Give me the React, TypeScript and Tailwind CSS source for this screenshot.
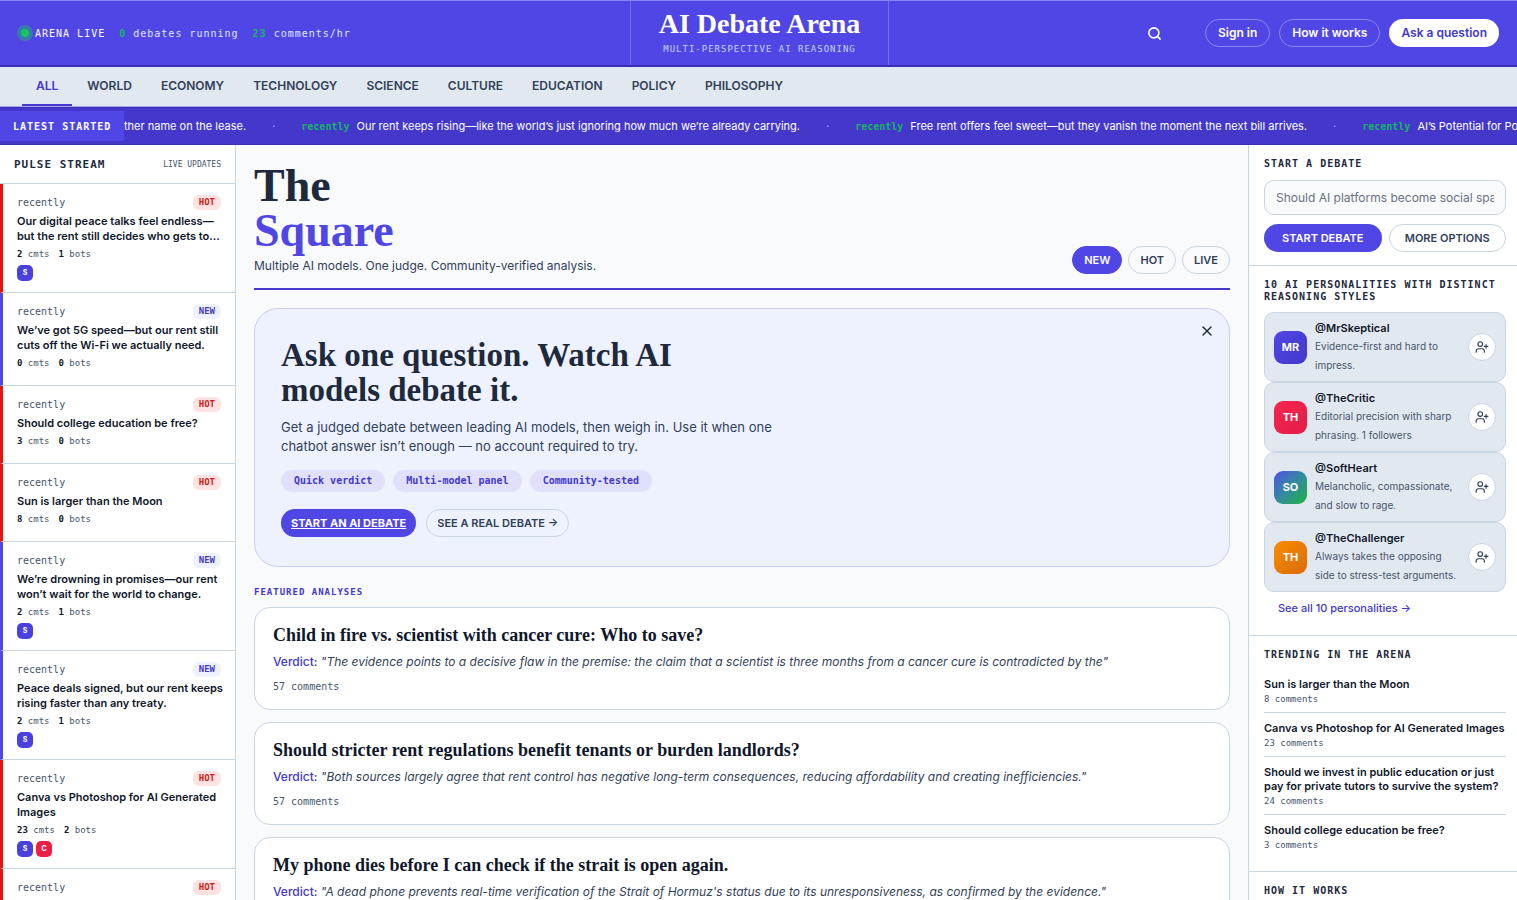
import { useState } from 'react';
import { Search, UserPlus, X } from 'lucide-react';
import clsx from 'clsx';

const SERIF = "font-['Liberation_Serif',serif] font-bold";
const MONO = "font-['DejaVu_Sans_Mono',monospace]";
const HEADING = "font-['DejaVu_Sans_Mono',monospace] text-[10px] leading-3 font-bold tracking-[1px] uppercase text-slate-800";

interface Pulse {
    title: string;
    tag: 'HOT' | 'NEW';
    comments: number;
    bots: number;
    avatars: string[];
}

const categories = ['All', 'World', 'Economy', 'Technology', 'Science', 'Culture', 'Education', 'Policy', 'Philosophy'];

const ticker = [
    'Our rent keeps rising—like the world’s just ignoring how much we’re already carrying.',
    'Free rent offers feel sweet—but they vanish the moment the next bill arrives.',
    'AI’s Potential for Positive Change',
];

const pulses: Pulse[] = [
    { title: 'Our digital peace talks feel endless—but the rent still decides who gets to…', tag: 'HOT', comments: 2, bots: 1, avatars: ['S'] },
    { title: 'We’ve got 5G speed—but our rent still cuts off the Wi-Fi we actually need.', tag: 'NEW', comments: 0, bots: 0, avatars: [] },
    { title: 'Should college education be free?', tag: 'HOT', comments: 3, bots: 0, avatars: [] },
    { title: 'Sun is larger than the Moon', tag: 'HOT', comments: 8, bots: 0, avatars: [] },
    { title: 'We’re drowning in promises—our rent won’t wait for the world to change.', tag: 'NEW', comments: 2, bots: 1, avatars: ['S'] },
    { title: 'Peace deals signed, but our rent keeps rising faster than any treaty.', tag: 'NEW', comments: 2, bots: 1, avatars: ['S'] },
    { title: 'Canva vs Photoshop for AI Generated Images', tag: 'HOT', comments: 23, bots: 2, avatars: ['S', 'C'] },
    { title: 'Should we invest in public education?', tag: 'HOT', comments: 24, bots: 0, avatars: [] },
];

const analyses = [
    {
        title: 'Child in fire vs. scientist with cancer cure: Who to save?',
        verdict: 'The evidence points to a decisive flaw in the premise: the claim that a scientist is three months from a cancer cure is contradicted by the',
        comments: 57,
    },
    {
        title: 'Should stricter rent regulations benefit tenants or burden landlords?',
        verdict: 'Both sources largely agree that rent control has negative long-term consequences, reducing affordability and creating inefficiencies.',
        comments: 57,
    },
    {
        title: 'My phone dies before I can check if the strait is open again.',
        verdict: "A dead phone prevents real-time verification of the Strait of Hormuz's status due to its unresponsiveness, as confirmed by the evidence.",
        comments: 12,
    },
];

const personalities = [
    { handle: 'MrSkeptical', initials: 'MR', bio: 'Evidence-first and hard to impress.', color: 'bg-linear-to-br from-[#4f46e5] to-[#4338ca]' },
    { handle: 'TheCritic', initials: 'TH', bio: 'Editorial precision with sharp phrasing. 1 followers', color: 'bg-linear-to-br from-[#f5274f] to-[#e11d48]' },
    { handle: 'SoftHeart', initials: 'SO', bio: 'Melancholic, compassionate, and slow to rage.', color: 'bg-linear-to-br from-[#4f46e5] to-[#22b322]' },
    { handle: 'TheChallenger', initials: 'TH', bio: 'Always takes the opposing side to stress-test arguments.', color: 'bg-linear-to-br from-[#fb8c04] to-[#d96c06]' },
];

const trending = [
    { title: 'Sun is larger than the Moon', comments: 8 },
    { title: 'Canva vs Photoshop for AI Generated Images', comments: 23 },
    { title: 'Should we invest in public education or just pay for private tutors to survive the system?', comments: 24 },
    { title: 'Should college education be free?', comments: 3 },
];

function Header() {
    return (
        <header className="grid grid-cols-[1fr_259px_1fr] h-[67px] pl-5 pr-[18px] bg-[#4f46e5] border-t border-t-[#8a84f0] border-b-2 border-b-[#3a2db8] text-white">
            <div className={clsx(MONO, 'flex items-center text-[10px] tracking-[1px] text-indigo-100')}>
                <span className="w-2 h-2 mx-px mr-[6px] rounded-full bg-[#16c75e] ring-4 ring-[#16c75e]/40" />
                <span className="text-white">ARENA LIVE</span>
                <span className="ml-[14px]"><b className="text-[#16b368]">0</b> debates running</span>
                <span className="ml-[14px]"><b className="text-[#16b368]">23</b> comments/hr</span>
            </div>
            <div className="flex flex-col items-center pt-[7px] border-x border-[#726bea]">
                <a href="#" className={clsx(SERIF, 'text-[28px] leading-8')}>AI Debate Arena</a>
                <p className={clsx(MONO, 'mt-[3px] text-[9px] leading-3 tracking-[1px] text-indigo-200')}>MULTI-PERSPECTIVE AI REASONING</p>
            </div>
            <div className="flex items-center justify-end gap-[9px] text-[12px] font-semibold">
                <button aria-label="Search" className="mr-[34px]"><Search size={15} strokeWidth={2.5} /></button>
                <a href="#" className="h-7 flex items-center px-3 rounded-full border border-[#8a84f0]">Sign in</a>
                <a href="#" className="h-7 flex items-center px-3 rounded-full border border-[#8a84f0]">How it works</a>
                <a href="#" className="h-7 flex items-center px-3 rounded-full bg-white text-[#4338ca]">Ask a question</a>
            </div>
        </header>
    );
}

function CategoryNav() {
    const [active, setActive] = useState('All');

    return (
        <nav className="flex gap-px h-10 pl-[22px] bg-slate-200 border-b border-[#a9a4ee]">
            {categories.map((c) => (
                <button
                    key={c}
                    onClick={() => setActive(c)}
                    className={clsx(
                        'px-[14px] text-[12px] font-semibold uppercase border-b-2',
                        c === active ? 'text-[#4338ca] border-[#4338ca]' : 'text-slate-700 border-transparent'
                    )}
                >
                    {c}
                </button>
            ))}
        </nav>
    );
}

function Ticker() {
    return (
        <div className="flex items-center h-[38px] bg-[#4338ca] border-y border-[#3a2db8] text-white overflow-hidden">
            <div className={clsx(MONO, 'shrink-0 w-[124px] h-[30px] pl-[13px] flex items-center bg-[#4f46e5] text-[10px] font-bold tracking-[1px]')}>
                LATEST STARTED
            </div>
            <div className="flex items-center whitespace-nowrap text-[11px]">
                <a href="#">ther name on the lease.</a>
                {ticker.map((t) => (
                    <div key={t} className="flex items-center">
                        <span className="mx-[26px] text-indigo-300">·</span>
                        <span className={clsx(MONO, 'mr-[7px] text-[10px] font-bold text-[#16b368]')}>recently</span>
                        <a href="#">{t}</a>
                    </div>
                ))}
            </div>
        </div>
    );
}

function PulseItem({ pulse }: { pulse: Pulse }) {
    const hot = pulse.tag === 'HOT';
    return (
        <li
            className={clsx(
                'pt-[10px] pb-[11px] px-[14px] border-l-3 border-b border-b-slate-300',
                hot ? 'border-l-[#e3170f]' : 'border-l-[#4f46e5]'
            )}
        >
            <div className={clsx(MONO, 'flex items-center justify-between h-4 text-[10px] text-slate-600')}>
                recently
                <span
                    className={clsx(
                        'px-[6px] rounded-md text-[9px] leading-[15px] font-bold',
                        hot ? 'bg-[#fee2e2] text-[#d11a1a]' : 'bg-[#eef2ff] text-[#4338ca]'
                    )}
                >
                    {pulse.tag}
                </span>
            </div>
            <a href="#" className="block mt-1 -mr-2 text-[11px] leading-[15px] font-semibold text-slate-900">{pulse.title}</a>
            <p className={clsx(MONO, 'mt-1 flex gap-[9px] text-[9px] leading-[13px] text-slate-600')}>
                <span><b className="text-slate-900">{pulse.comments}</b> cmts</span>
                <span><b className="text-slate-900">{pulse.bots}</b> bots</span>
            </p>
            <div className="mt-1 flex gap-[3px]">
                {pulse.avatars.map((a) => (
                    <span
                        key={a}
                        className={clsx(
                            'w-4 h-4 flex items-center justify-center rounded-[5px] text-[7px] font-bold text-white',
                            a === 'C' ? 'bg-[#ee1f46]' : 'bg-[#4a40e0]'
                        )}
                    >
                        {a}
                    </span>
                ))}
            </div>
        </li>
    );
}

function PulseStream() {
    return (
        <aside className="w-[236px] shrink-0 bg-white border-r border-slate-300">
            <div className="flex items-center justify-between h-[39px] px-[14px] pt-[2px] border-b border-slate-300">
                <h2 className={clsx(MONO, 'text-[11px] font-bold tracking-[1px] text-slate-800')}>PULSE STREAM</h2>
                <span className={clsx(MONO, 'text-[8px] text-slate-600')}>LIVE UPDATES</span>
            </div>
            <ul>
                {pulses.map((p) => <PulseItem key={p.title} pulse={p} />)}
            </ul>
        </aside>
    );
}

function Hero() {
    const [open, setOpen] = useState(true);
    if (!open) return null;

    return (
        <section className="relative mt-[18px] px-[26px] py-[29px] rounded-3xl border border-[#c9cdf5] bg-[#eef2ff]">
            <button aria-label="Close" onClick={() => setOpen(false)} className="absolute top-[14px] right-[14px] text-slate-800">
                <X size={16} />
            </button>
            <h2 className={clsx(SERIF, 'max-w-[440px] text-[33px] leading-[35px] text-slate-800')}>
                Ask one question. Watch AI models debate it.
            </h2>
            <p className="mt-[10px] max-w-[500px] text-[13px] leading-[19px] text-slate-700">
                Get a judged debate between leading AI models, then weigh in. Use it when one chatbot answer isn’t enough — no account required to try.
            </p>
            <div className="mt-[14px] flex gap-2">
                {['Quick verdict', 'Multi-model panel', 'Community-tested'].map((c) => (
                    <span key={c} className={clsx(MONO, 'px-[13px] rounded-full bg-[#e0e0fb] text-[10px] leading-[22px] font-bold text-[#4338ca]')}>{c}</span>
                ))}
            </div>
            <div className="mt-[17px] flex gap-[10px] text-[11px]">
                <a href="#" className="h-7 flex items-center px-[10px] rounded-full bg-[#4f46e5] text-white font-bold underline">START AN AI DEBATE</a>
                <a href="#" className="h-7 flex items-center px-[10px] rounded-full border border-slate-300 text-slate-700 font-semibold">SEE A REAL DEBATE →</a>
            </div>
        </section>
    );
}

function Feed() {
    const [sort, setSort] = useState('NEW');

    return (
        <main className="flex-1 min-w-0 px-[18px] pt-[18px]">
            <div className="flex items-end justify-between pb-[14px] border-b-2 border-[#4338ca]">
                <div>
                    <h1 className={clsx(SERIF, 'text-[46px] leading-[45px] text-slate-800')}>
                        The<br />
                        <span className="text-[#4f46e5]">Square</span>
                    </h1>
                    <p className="mt-[5px] text-[12px] leading-4 text-slate-700">Multiple AI models. One judge. Community-verified analysis.</p>
                </div>
                <div className="flex gap-[6px]">
                    {['NEW', 'HOT', 'LIVE'].map((s) => (
                        <button
                            key={s}
                            onClick={() => setSort(s)}
                            className={clsx(
                                'h-7 px-[11px] rounded-full border text-[11px] font-semibold',
                                s === sort ? 'bg-[#4f46e5] border-[#4f46e5] text-white' : 'border-slate-300 text-slate-700'
                            )}
                        >
                            {s}
                        </button>
                    ))}
                </div>
            </div>

            <Hero />

            <h2 className={clsx(MONO, 'mt-[18px] mb-2 text-[9px] leading-[14px] font-bold tracking-[1px] text-[#4338ca]')}>FEATURED ANALYSES</h2>
            <div className="flex flex-col gap-3">
                {analyses.map((a) => (
                    <article key={a.title} className="px-[18px] pt-4 pb-[15px] rounded-2xl border border-slate-300 bg-white">
                        <h3 className={clsx(SERIF, 'text-[18px] leading-[22px] text-slate-900')}>{a.title}</h3>
                        <p className="mt-[6px] text-[12px] leading-5 text-slate-700 truncate">
                            <span className="font-medium text-[#4338ca]">Verdict:</span> <em>"{a.verdict}"</em>
                        </p>
                        <p className={clsx(MONO, 'mt-2 text-[10px] leading-[14px] text-slate-600')}>{a.comments} comments</p>
                    </article>
                ))}
            </div>
        </main>
    );
}

function Sidebar() {
    return (
        <aside className="w-[269px] shrink-0 bg-white border-l border-slate-300">
            <section className="pl-[15px] pr-[11px] py-[13px] border-b border-slate-300">
                <h2 className={HEADING}><label htmlFor="topic">Start a debate</label></h2>
                <input
                    id="topic"
                    type="text"
                    placeholder="Should AI platforms become social spaces?"
                    className="mt-[10px] w-full h-[35px] px-[11px] rounded-[10px] border border-slate-300 bg-slate-50 text-[12px] placeholder:text-gray-500"
                />
                <div className="mt-[9px] grid grid-cols-2 gap-[7px] text-[11px]">
                    <button className="h-7 rounded-full bg-[#4f46e5] text-white font-semibold">START DEBATE</button>
                    <button className="h-7 rounded-full border border-slate-300 text-slate-700 font-semibold">MORE OPTIONS</button>
                </div>
            </section>

            <section className="pl-[15px] pr-[11px] pt-[13px] pb-[19px] border-b border-slate-300">
                <h2 className={HEADING}>10 AI personalities with distinct reasoning styles</h2>
                <div className="mt-[9px]">
                    {personalities.map((p) => (
                        <div key={p.handle} className="flex items-center gap-2 px-[9px] py-[6px] rounded-[10px] border border-slate-300 bg-slate-200">
                            <span className={clsx('w-[33px] h-[33px] shrink-0 flex items-center justify-center rounded-[9px] text-[11px] font-bold text-white', p.color)}>
                                {p.initials}
                            </span>
                            <div className="flex-1 min-w-0">
                                <a href="#" className="block text-[11px] leading-[18px] font-semibold text-slate-900">@{p.handle}</a>
                                <p className="text-[10px] leading-[19px] text-slate-600">{p.bio}</p>
                            </div>
                            <button aria-label={`Follow ${p.handle}`} className="w-7 h-7 shrink-0 flex items-center justify-center rounded-full border border-slate-300 bg-white text-slate-700">
                                <UserPlus size={14} />
                            </button>
                        </div>
                    ))}
                </div>
                <a href="#" className="block mt-2 ml-[14px] text-[11px] leading-4 font-medium text-[#4338ca]">See all 10 personalities →</a>
            </section>

            <section className="pl-[15px] pr-[11px] py-[13px] border-b border-slate-300">
                <h2 className={HEADING}>Trending in the arena</h2>
                <ul className="mt-2 divide-y divide-slate-300">
                    {trending.map((t) => (
                        <li key={t.title} className="pt-2 pb-[7px]">
                            <a href="#" className="block text-[11px] leading-[14px] font-semibold text-slate-900">{t.title}</a>
                            <p className={clsx(MONO, 'mt-[2px] text-[9px] leading-3 text-slate-600')}>{t.comments} comments</p>
                        </li>
                    ))}
                </ul>
            </section>

            <section className="pl-[15px] pt-[13px]">
                <h2 className={HEADING}>How it works</h2>
            </section>
        </aside>
    );
}

export default function App() {
    return (
        <div className="h-screen overflow-hidden flex flex-col bg-slate-50 font-['Inter',sans-serif]">
            <Header />
            <CategoryNav />
            <Ticker />
            <div className="flex flex-1 min-h-0 items-stretch overflow-hidden">
                <PulseStream />
                <Feed />
                <Sidebar />
            </div>
        </div>
    );
}
